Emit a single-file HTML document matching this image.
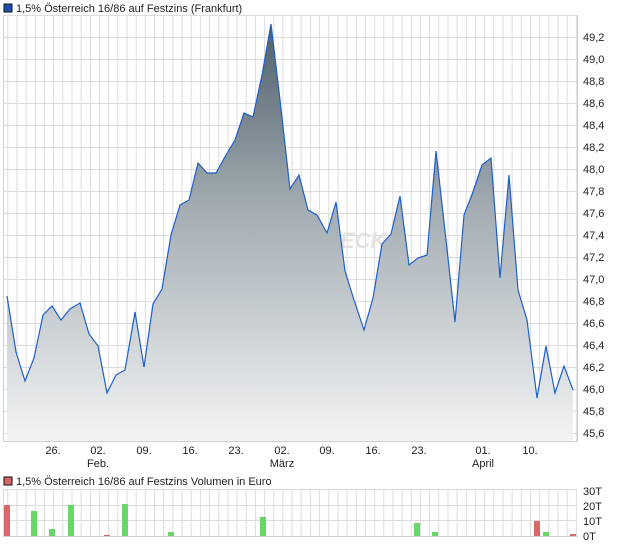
<!DOCTYPE html>
<html><head><meta charset="utf-8"><style>
body{margin:0;background:#fff;width:620px;height:546px;overflow:hidden;font-family:"Liberation Sans",sans-serif}
</style></head><body>
<svg width="620" height="546" xmlns="http://www.w3.org/2000/svg" font-family="Liberation Sans, sans-serif" font-size="11" fill="#222">
<defs>
<linearGradient id="g" gradientUnits="userSpaceOnUse" x1="0" y1="20" x2="0" y2="441">
<stop offset="0" stop-color="#4d5d68"/><stop offset="0.45" stop-color="#a3adb3"/><stop offset="1" stop-color="#f3f4f5"/>
</linearGradient>
<pattern id="vg" x="7.3" y="0" width="9.17" height="600" patternUnits="userSpaceOnUse"><rect x="0" y="0" width="1" height="600" fill="#dcdcdc"/></pattern>
<pattern id="hg" x="0" y="15" width="700" height="22" patternUnits="userSpaceOnUse"><rect x="0" y="0" width="700" height="1" fill="#dcdcdc"/></pattern>
</defs>
<rect x="4" y="4" width="8" height="8" fill="#1a4fb0" stroke="#111" stroke-width="1"/>
<text x="16" y="12">1,5% Österreich 16/86 auf Festzins (Frankfurt)</text>
<rect x="3" y="15" width="574" height="426" fill="url(#vg)"/>
<rect x="3" y="15" width="574" height="420" fill="url(#hg)"/>
<text x="340" y="248" font-size="22" font-style="italic" font-weight="bold" fill="#e6e3df">ECK</text>
<path d="M7,296 L16,352 25,381 34,358 43,315 52,306 61,320 70,309 80,303 89,334 98,346 107,393 116,375 125,370 135,312 144,367 153,304 162,289 171,235 180,205 189,200 198,163 207,173 216,173 226,155 235,140 244,113 253,117 262,75 271,24 280,100 290,189 299,175 308,210 317,215 327,233 336,202 345,271 354,300 364,330 373,298 382,244 391,234 400,196 409,265 418,258 427,255 436,151 446,240 455,322 464,215 473,192 482,165 491,158 500,278 509,175 518,290 527,320 537,398 546,346 555,393 564,366 573,390 L573,441 L7,441 Z" fill="url(#g)"/>
<path d="M7,296 L16,352 25,381 34,358 43,315 52,306 61,320 70,309 80,303 89,334 98,346 107,393 116,375 125,370 135,312 144,367 153,304 162,289 171,235 180,205 189,200 198,163 207,173 216,173 226,155 235,140 244,113 253,117 262,75 271,24 280,100 290,189 299,175 308,210 317,215 327,233 336,202 345,271 354,300 364,330 373,298 382,244 391,234 400,196 409,265 418,258 427,255 436,151 446,240 455,322 464,215 473,192 482,165 491,158 500,278 509,175 518,290 527,320 537,398 546,346 555,393 564,366 573,390" fill="none" stroke="#1f5fc8" stroke-width="1.2"/>
<rect x="3" y="15" width="1" height="427" fill="#d0d0d0"/>
<rect x="3" y="441" width="575" height="1" fill="#d0d0d0"/>
<rect x="577" y="15" width="1" height="427" fill="#d0d0d0"/>
<g fill="#222">
<text x="583" y="41">49,2</text><text x="583" y="63">49,0</text><text x="583" y="85">48,8</text><text x="583" y="107">48,6</text><text x="583" y="129">48,4</text><text x="583" y="151">48,2</text><text x="583" y="173">48,0</text><text x="583" y="195">47,8</text><text x="583" y="217">47,6</text><text x="583" y="239">47,4</text><text x="583" y="261">47,2</text><text x="583" y="283">47,0</text><text x="583" y="305">46,8</text><text x="583" y="327">46,6</text><text x="583" y="349">46,4</text><text x="583" y="371">46,2</text><text x="583" y="393">46,0</text><text x="583" y="415">45,8</text><text x="583" y="437">45,6</text>
</g>
<g text-anchor="middle">
<text x="53" y="454">26.</text><text x="98" y="454">02.</text><text x="144" y="454">09.</text><text x="190" y="454">16.</text><text x="236" y="454">23.</text><text x="282" y="454">02.</text><text x="327" y="454">09.</text><text x="373" y="454">16.</text><text x="419" y="454">23.</text><text x="483" y="454">01.</text><text x="530" y="454">10.</text>
<text x="98" y="467">Feb.</text><text x="282" y="467">März</text><text x="483" y="467">April</text>
</g>
<rect x="4" y="477" width="8" height="8" fill="#d9676a" stroke="#111" stroke-width="1"/>
<text x="16" y="485">1,5% Österreich 16/86 auf Festzins Volumen in Euro</text>
<rect x="3" y="489" width="574" height="47" fill="url(#vg)"/>
<rect x="3" y="489" width="574" height="1" fill="#dcdcdc"/>
<rect x="3" y="505" width="574" height="1" fill="#dcdcdc"/>
<rect x="3" y="520" width="574" height="1" fill="#dcdcdc"/>
<rect x="3" y="489" width="1" height="48" fill="#dcdcdc"/>
<g fill="#68d668">
<rect x="31" y="511" width="6" height="25"/><rect x="49" y="529" width="6" height="7"/><rect x="68" y="505" width="6" height="31"/><rect x="122" y="504" width="6" height="32"/><rect x="168" y="532" width="6" height="4"/><rect x="260" y="517" width="6" height="19"/><rect x="414" y="523" width="6" height="13"/><rect x="432" y="532" width="6" height="4"/><rect x="543" y="532" width="6" height="4"/>
</g>
<g fill="#d9676a">
<rect x="4" y="505" width="6" height="31"/><rect x="104" y="535" width="6" height="1"/><rect x="534" y="521" width="6" height="15"/><rect x="570" y="534" width="6" height="2"/>
</g>
<rect x="3" y="536" width="575" height="1" fill="#d0d0d0"/>
<text x="583" y="495">30T</text><text x="583" y="510">20T</text><text x="583" y="525">10T</text><text x="583" y="540">0T</text>
</svg>
</body></html>
